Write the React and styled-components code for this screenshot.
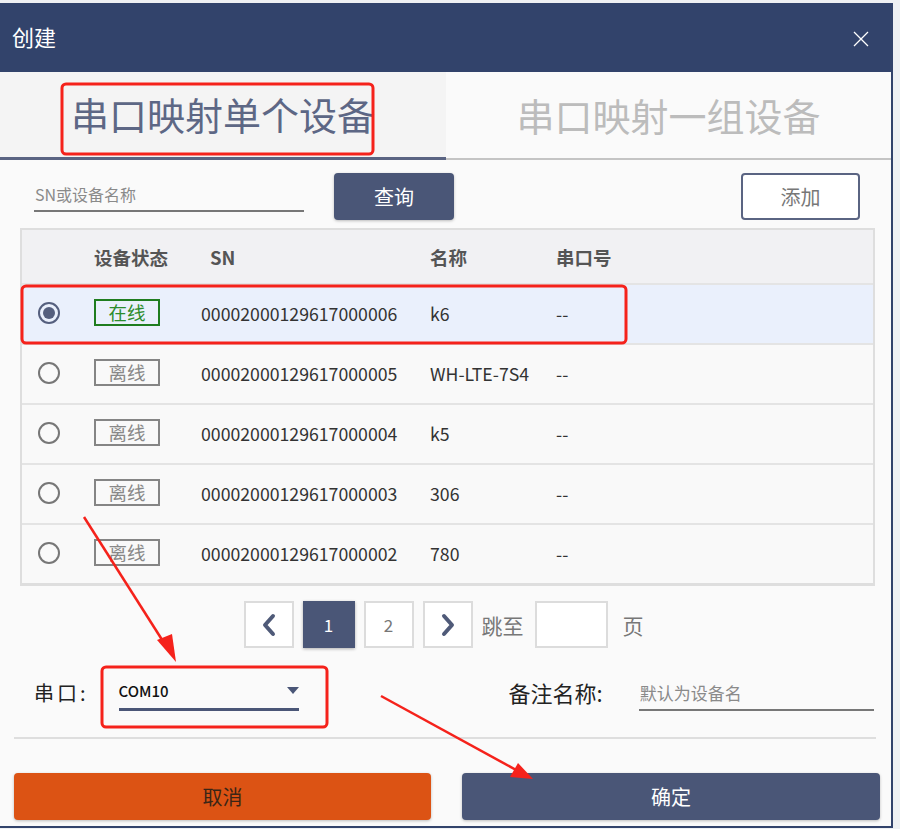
import styled, { createGlobalStyle } from "styled-components";

const GlobalStyle = createGlobalStyle`
  body {
    margin: 0;
    background: #eef0f3;
    font-family: "Noto Sans CJK SC", "Noto Sans", sans-serif;
  }
`;

const Page = styled.div`
  position: relative;
  width: 900px;
  height: 829px;
  overflow: hidden;
  padding-top: 3px;
  box-sizing: border-box;
`;

const Dialog = styled.div`
  width: 891px;
  height: 823px;
  background: #fafafa;
  border-right: 2px solid #32436b;
  border-bottom: 2px solid #32436b;
  display: flex;
  flex-direction: column;
`;

const Header = styled.div`
  height: 69px;
  box-sizing: border-box;
  background: #32436b;
  display: flex;
  align-items: center;
  justify-content: space-between;
  padding: 0 22px 4px 12px;
  color: #fff;
  font-size: 22px;
`;

const Tabs = styled.div`
  display: grid;
  grid-template-columns: 446px 1fr;
  height: 88px;
`;

const Tab = styled.div`
  display: flex;
  align-items: center;
  justify-content: center;
  font-size: 38px;
  padding-bottom: 2px;
  box-sizing: border-box;
  background: ${(p) => (p.$active ? "#f4f4f4" : "#fafafa")};
  color: ${(p) => (p.$active ? "#5d6785" : "#bcbcbc")};
  border-bottom: ${(p) => (p.$active ? "3px solid #5a6482" : "2px solid #c4c4c4")};
`;

const Body = styled.div`
  padding: 13px 16px 0 20px;
  display: flex;
  flex-direction: column;
`;

const SearchRow = styled.div`
  display: flex;
  align-items: center;
  height: 47px;
`;

const LineInput = styled.input`
  border: none;
  border-bottom: 2px solid ${(p) => p.$line || "#777"};
  background: transparent;
  outline: none;
  font-family: inherit;
  font-size: ${(p) => p.$size || "16px"};
  color: #333;
  padding: 0 1px 4px;
  width: ${(p) => p.$w};
  box-sizing: border-box;
  &::placeholder {
    color: #8a8a8a;
  }
`;

const Button = styled.button`
  font-family: inherit;
  font-size: 20px;
  height: 47px;
  width: ${(p) => p.$w || "auto"};
  border-radius: 4px;
  cursor: pointer;
  background: ${(p) => (p.$outline ? "#fff" : p.$bg || "#4a5677")};
  color: ${(p) => (p.$outline ? "#777" : p.$color || "#fff")};
  border: ${(p) => (p.$outline ? "2px solid #5a6482" : "none")};
  box-shadow: ${(p) => (p.$outline ? "none" : "0 1px 3px rgba(0,0,0,0.25)")};
`;

const Table = styled.div`
  margin-top: 8px;
  width: 855px;
  border: 2px solid #dedede;
  border-bottom-width: 3px;
  box-sizing: border-box;
  background: #f9f9f9;
`;

const Row = styled.div`
  display: grid;
  grid-template-columns: 72px 107px 229px 126px 1fr;
  align-items: center;
  height: ${(p) => (p.$head ? "53px" : "60px")};
  border-top: ${(p) => (p.$head ? "none" : "2px solid #e4e4e4")};
  box-sizing: border-box;
  background: ${(p) => (p.$head ? "#f1f1f3" : p.$selected ? "#eaf0fc" : "#f9f9f9")};
  font-size: ${(p) => (p.$head ? "18.5px" : "17.7px")};
  color: ${(p) => (p.$head ? "#555" : "#333")};
  font-weight: ${(p) => (p.$head ? 600 : 400)};
  padding-bottom: ${(p) => (p.$head ? "0" : "3px")};
`;

const Cell = styled.div`
  padding-left: ${(p) => p.$pl || "0"};
  display: flex;
  align-items: center;
`;

const Radio = styled.span`
  width: 22px;
  height: 22px;
  border-radius: 50%;
  box-sizing: border-box;
  border: 2px solid ${(p) => (p.$on ? "#555f7e" : "#777")};
  display: flex;
  align-items: center;
  justify-content: center;
  margin-left: 16px;
  &::after {
    content: "";
    width: 12px;
    height: 12px;
    border-radius: 50%;
    background: ${(p) => (p.$on ? "#555f7e" : "transparent")};
  }
`;

const Badge = styled.span`
  width: 66px;
  height: 27px;
  box-sizing: border-box;
  border: 2px solid ${(p) => (p.$online ? "#1f7d1f" : "#858585")};
  color: ${(p) => (p.$online ? "#2c8c2c" : "#888")};
  display: flex;
  align-items: center;
  justify-content: center;
  font-size: 18.5px;
  line-height: 1;
`;

const Pager = styled.div`
  display: flex;
  align-items: center;
  justify-content: center;
  gap: 9px;
  margin-top: 15px;
  padding-right: 2px;
  height: 47px;
`;

const PageBox = styled.div`
  width: ${(p) => (p.$active ? "52px" : "50px")};
  height: 47px;
  box-sizing: border-box;
  border: ${(p) => (p.$active ? "none" : "2px solid #dcdcdc")};
  background: ${(p) => (p.$active ? "#4a5677" : "#fff")};
  color: ${(p) => (p.$active ? "#fff" : "#777")};
  box-shadow: ${(p) => (p.$active ? "0 1px 3px rgba(0,0,0,0.3)" : "none")};
  display: flex;
  align-items: center;
  justify-content: center;
  font-size: 17px;
`;

const PagerText = styled.span`
  font-size: 21px;
  color: #777;
  margin: 0 ${(p) => p.$m || "0"};
`;

const JumpInput = styled.div`
  width: 73px;
  height: 47px;
  box-sizing: border-box;
  border: 2px solid #dcdcdc;
  background: #fff;
  margin-left: 2px;
`;

const FormRow = styled.div`
  display: flex;
  align-items: center;
  height: 62px;
  margin-top: 13px;
  padding-left: 14px;
`;

const Label = styled.span`
  font-size: ${(p) => p.$size || "20px"};
  color: #222;
  letter-spacing: ${(p) => p.$ls || "0"};
`;

const Select = styled.div`
  width: 180px;
  margin-left: 30px;
  border-bottom: 3px solid #4a5677;
  display: flex;
  align-items: center;
  justify-content: space-between;
  padding-bottom: 7px;
  font-size: 15px;
  font-weight: 500;
  color: #111;
  margin-top: 6px;
`;

const Caret = styled.span`
  width: 0;
  height: 0;
  border-left: 6px solid transparent;
  border-right: 6px solid transparent;
  border-top: 7px solid #4a5677;
`;

const Divider = styled.div`
  height: 2px;
  background: #dedede;
  margin: 14px 0 0 -6px;
  width: 862px;
`;

const Actions = styled.div`
  display: grid;
  grid-template-columns: 417px 418px;
  justify-content: space-between;
  margin: 34px 0 0 -6px;
  width: 866px;
`;

const Overlay = styled.svg`
  position: absolute;
  left: 0;
  top: 0;
  pointer-events: none;
`;

const rows = [
  { sn: "00002000129617000006", name: "k6", online: true, selected: true },
  { sn: "00002000129617000005", name: "WH-LTE-7S4" },
  { sn: "00002000129617000004", name: "k5" },
  { sn: "00002000129617000003", name: "306" },
  { sn: "00002000129617000002", name: "780" },
];

const Chevron = ({ dir }) => (
  <svg width="16" height="24" viewBox="0 0 16 24">
    <polyline
      points={dir === "left" ? "12,3 4,12 12,21" : "4,3 12,12 4,21"}
      fill="none"
      stroke="#4f5a78"
      strokeWidth="4"
      strokeLinecap="round"
      strokeLinejoin="round"
    />
  </svg>
);

export default function App() {
  return (
    <Page>
      <GlobalStyle />
      <Dialog>
        <Header>
          <span>创建</span>
          <svg width="16" height="16" viewBox="0 0 16 16" style={{ marginTop: 6 }}>
            <path d="M1 1 L15 15 M15 1 L1 15" stroke="#fff" strokeWidth="1.3" />
          </svg>
        </Header>
        <Tabs>
          <Tab $active>串口映射单个设备</Tab>
          <Tab>串口映射一组设备</Tab>
        </Tabs>
        <Body>
          <SearchRow>
            <LineInput $w="270px" placeholder="SN或设备名称" style={{ marginLeft: 14 }} />
            <Button $w="120px" style={{ marginLeft: 30 }}>查询</Button>
            <Button $outline $w="119px" style={{ marginLeft: "auto", marginRight: 15 }}>
              添加
            </Button>
          </SearchRow>
          <Table>
            <Row $head>
              <Cell />
              <Cell>设备状态</Cell>
              <Cell $pl="9px">SN</Cell>
              <Cell>名称</Cell>
              <Cell>串口号</Cell>
            </Row>
            {rows.map((r) => (
              <Row key={r.sn} $selected={r.selected}>
                <Cell>
                  <Radio $on={r.selected} />
                </Cell>
                <Cell>
                  <Badge $online={r.online}>{r.online ? "在线" : "离线"}</Badge>
                </Cell>
                <Cell>{r.sn}</Cell>
                <Cell>{r.name}</Cell>
                <Cell>--</Cell>
              </Row>
            ))}
          </Table>
          <Pager>
            <PageBox>
              <Chevron dir="left" />
            </PageBox>
            <PageBox $active>1</PageBox>
            <PageBox>2</PageBox>
            <PageBox>
              <Chevron dir="right" />
            </PageBox>
            <PagerText>跳至</PagerText>
            <JumpInput />
            <PagerText $m="6px">页</PagerText>
          </Pager>
          <FormRow>
            <Label $ls="3px">串口:</Label>
            <Select>
              <span>COM10</span>
              <Caret />
            </Select>
            <Label $size="22px" style={{ marginLeft: 210 }}>备注名称:</Label>
            <LineInput
              $w="235px"
              $size="17px"
              placeholder="默认为设备名"
              style={{ marginLeft: 36, marginTop: 6 }}
            />
          </FormRow>
          <Divider />
          <Actions>
            <Button $bg="#dc5314" $color="#3a2516">取消</Button>
            <Button>确定</Button>
          </Actions>
        </Body>
      </Dialog>
      <Overlay width="900" height="829">
        <g fill="none" stroke="#f5221b" strokeWidth="3">
          <rect x="62" y="84" width="311" height="70" rx="4" />
          <rect x="22" y="286" width="604" height="57" rx="4" />
          <rect x="102" y="667" width="225" height="60" rx="4" />
        </g>
        <g stroke="#f5221b" strokeWidth="2.5" fill="#f5221b">
          <line x1="84" y1="517" x2="166" y2="646" />
          <polygon points="176,662 157,640 172,634" stroke="none" />
          <line x1="381" y1="696" x2="518" y2="771" />
          <polygon points="533,779 510,777 518,763" stroke="none" />
        </g>
      </Overlay>
    </Page>
  );
}
